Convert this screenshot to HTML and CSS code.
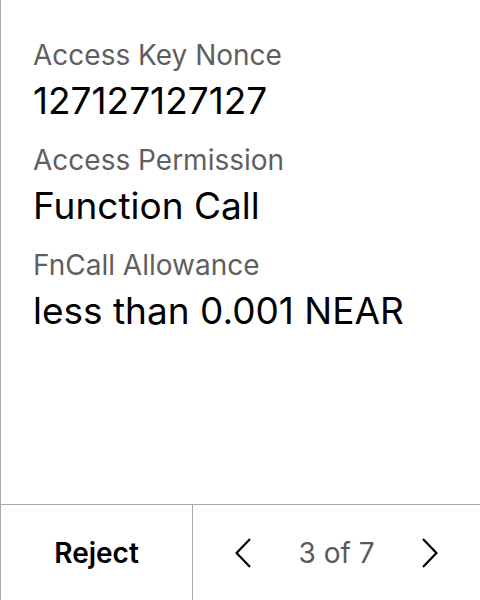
FILE: index.html
```html
<!DOCTYPE html>
<html>
<head>
<meta charset="utf-8">
<link rel="stylesheet" href="styles.css">
</head>
<body>
<div class="screen">
  <div class="content">
    <div class="field">
      <div class="label">Access Key Nonce</div>
      <div class="value">127127127127</div>
    </div>
    <div class="field">
      <div class="label">Access Permission</div>
      <div class="value">Function Call</div>
    </div>
    <div class="field">
      <div class="label">FnCall Allowance</div>
      <div class="value">less than 0.001 NEAR</div>
    </div>
  </div>
  <div class="footer">
    <div class="reject">Reject</div>
    <div class="pager">
      <svg class="chev" width="16" height="30" viewBox="0 0 16 30"><path d="M15 1 L1.6 15 L15 29" fill="none" stroke="#000" stroke-width="2.2"/></svg>
      <span class="count">3 of 7</span>
      <svg class="chev" width="16" height="30" viewBox="0 0 16 30"><path d="M1 1 L14.4 15 L1 29" fill="none" stroke="#000" stroke-width="2.2"/></svg>
    </div>
  </div>
</div>
</body>
</html>
```
FILE: styles.css
```css
html, body {
  margin: 0;
  padding: 0;
  background: #fff;
}
body {
  font-family: Inter, "Noto Sans", sans-serif;
}
.screen {
  width: 480px;
  height: 600px;
  box-sizing: border-box;
  border-left: 1px solid #aaa;
  display: flex;
  flex-direction: column;
}
.content {
  flex: 1;
  padding: 38px 0 0 32px;
  display: flex;
  flex-direction: column;
  gap: 20px;
}
.field {
  display: flex;
  flex-direction: column;
  gap: 7px;
}
.label {
  font-size: 28px;
  line-height: 34px;
  color: #5f5f5f;
}
.value {
  font-size: 37px;
  line-height: 44px;
  color: #000;
}
.footer {
  height: 96px;
  box-sizing: border-box;
  border-top: 1px solid #aaa;
  display: flex;
}
.reject {
  width: 192px;
  box-sizing: border-box;
  border-right: 1px solid #aaa;
  display: flex;
  align-items: center;
  justify-content: center;
  font-size: 28px;
  font-weight: 600;
  color: #000;
}
.pager {
  flex: 1;
  display: flex;
  align-items: center;
  justify-content: space-between;
  padding: 0 42px 0 42px;
}
.chev {
  display: block;
}
.count {
  font-size: 28px;
  color: #5a5a5a;
}
```
